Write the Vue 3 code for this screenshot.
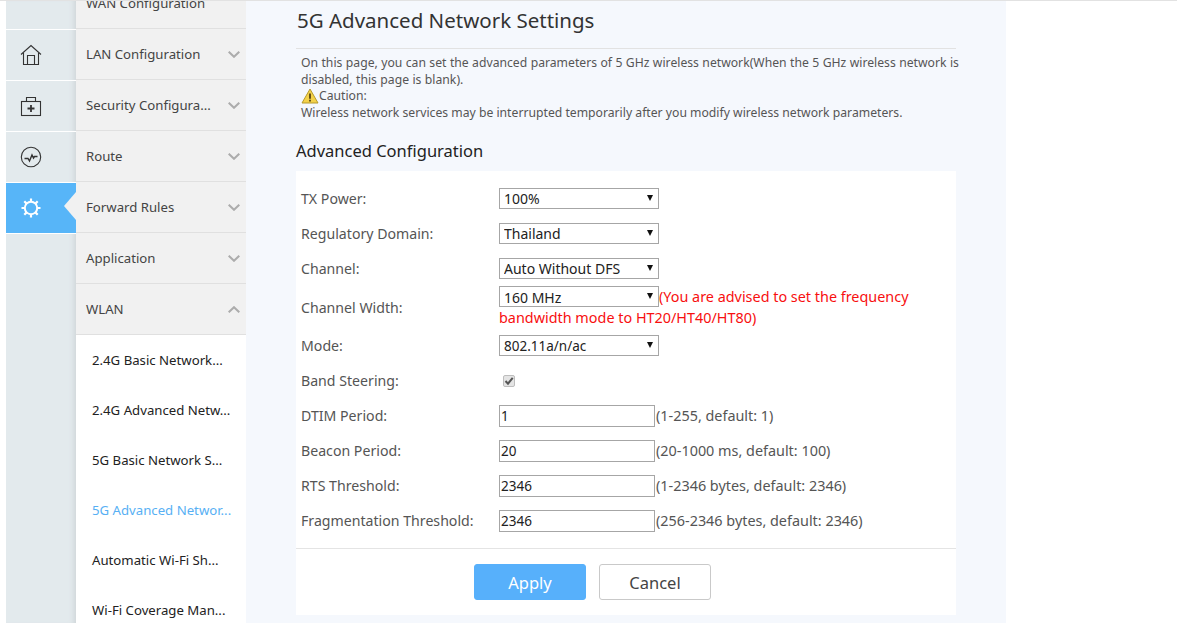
<script setup>
const railItems = [
  { key: 'blank', h: 28 },
  { key: 'home', h: 50 },
  { key: 'kit', h: 50 },
  { key: 'pulse', h: 50 },
  { key: 'gear', h: 50, active: true },
  { key: 'rest', h: 400 }
]
const menus = [
  { label: 'WAN Configuration', noChevron: true },
  { label: 'LAN Configuration' },
  { label: 'Security Configura...' },
  { label: 'Route' },
  { label: 'Forward Rules' },
  { label: 'Application' },
  { label: 'WLAN', open: true }
]
const subs = [
  { label: '2.4G Basic Network...' },
  { label: '2.4G Advanced Netw...' },
  { label: '5G Basic Network S...' },
  { label: '5G Advanced Networ...', active: true },
  { label: 'Automatic Wi-Fi Sh...' },
  { label: 'Wi-Fi Coverage Man...' }
]
</script>

<template>
  <div class="page">
    <aside class="rail">
      <div v-for="r in railItems" :key="r.key" class="rail-item" :class="{ active: r.active }" :style="{ height: r.h + 'px' }">
        <svg v-if="r.key === 'home'" width="22" height="22" viewBox="0 0 22 22" fill="none" stroke="#333" stroke-width="1.1">
          <path d="M1 10.5 11 1.5l10 9" />
          <path d="M3.5 9v11.5h15V9" />
          <path d="M7.5 20.5V11.5h7v9" />
        </svg>
        <svg v-else-if="r.key === 'kit'" width="22" height="22" viewBox="0 0 22 22" fill="none" stroke="#333" stroke-width="1.1">
          <rect x="1.5" y="6.5" width="19" height="14" />
          <path d="M6.5 6.5v-4h9v4" />
          <path d="M11 10v7M7.5 13.5h7" stroke-width="1.8" />
        </svg>
        <svg v-else-if="r.key === 'pulse'" width="22" height="22" viewBox="0 0 22 22" fill="none" stroke="#333" stroke-width="1.1">
          <circle cx="11" cy="11" r="9.7" />
          <path d="M4.5 12.5h3.5l1.5 2.5 2.5-6 1.5 3 1-1.5h3" stroke-width="1.4" />
        </svg>
        <svg v-else-if="r.key === 'gear'" width="22" height="22" viewBox="0 0 22 22" fill="none" stroke="#fff">
          <circle cx="11" cy="11" r="6.2" stroke-width="2" />
          <path d="M11 1.5v3.4M11 17.1v3.4M1.5 11h3.4M17.1 11h3.4M4.3 4.3l2.3 2.3M15.4 15.4l2.3 2.3M17.7 4.3l-2.3 2.3M6.6 15.4l-2.3 2.3" stroke-width="2.2" />
        </svg>
      </div>
    </aside>

    <nav class="menu">
      <div v-for="m in menus" :key="m.label" class="menu-row">
        <span>{{ m.label }}</span>
        <svg v-if="!m.noChevron" class="chev" width="12" height="7" viewBox="0 0 12 7" fill="none" stroke="#acacac" stroke-width="2">
          <path :d="m.open ? 'M.7 6.3 6 1.2l5.3 5.1' : 'M.7.7 6 5.8 11.3.7'" />
        </svg>
      </div>
      <div v-for="s in subs" :key="s.label" class="sub-row" :class="{ active: s.active }">{{ s.label }}</div>
    </nav>

    <main class="content">
      <h1 class="title">5G Advanced Network Settings</h1>
      <div class="intro">
        <p class="lead">On this page, you can set the advanced parameters of 5 GHz wireless network(When the 5 GHz wireless network is disabled, this page is blank).</p>
        <p class="caution">
          <svg width="18" height="16" viewBox="0 0 18 16">
            <path d="M9 1 17 15H1Z" fill="#f4d24a" stroke="#b59a2c" stroke-width="1" stroke-linejoin="round" />
            <path d="M9 5.5v5.2M9 11.8v1.6" stroke="#4a3a10" stroke-width="1.7" />
          </svg><span>Caution:</span>
        </p>
        <p>Wireless network services may be interrupted temporarily after you modify wireless network parameters.</p>
      </div>
      <h2 class="sub-title">Advanced Configuration</h2>
      <section class="panel">
        <div class="form">
          <div class="row">
            <label>TX Power:</label>
            <div class="sel"><select><option>100%</option></select></div>
          </div>
          <div class="row">
            <label>Regulatory Domain:</label>
            <div class="sel"><select><option>Thailand</option></select></div>
          </div>
          <div class="row">
            <label>Channel:</label>
            <div class="sel"><select><option>Auto Without DFS</option></select></div>
          </div>
          <div class="row tall">
            <label>Channel Width:</label>
            <div class="field warn">
              <div class="sel inline"><select><option>160 MHz</option></select></div><span class="red">(You are advised to set the frequency bandwidth mode to HT20/HT40/HT80)</span>
            </div>
          </div>
          <div class="row">
            <label>Mode:</label>
            <div class="sel narrow"><select><option>802.11a/n/ac</option></select></div>
          </div>
          <div class="row">
            <label>Band Steering:</label>
            <span class="check-wrap">
              <input class="check" type="checkbox" checked disabled />
              <svg class="tick" width="12" height="12" viewBox="0 0 12 12" fill="none" stroke="#555" stroke-width="2">
                <path d="M2.5 6 5 8.7 9.7 2.8" />
              </svg>
            </span>
          </div>
          <div class="row">
            <label>DTIM Period:</label>
            <input class="txt" type="text" value="1" /><span class="hint">(1-255, default: 1)</span>
          </div>
          <div class="row">
            <label>Beacon Period:</label>
            <input class="txt" type="text" value="20" /><span class="hint">(20-1000 ms, default: 100)</span>
          </div>
          <div class="row">
            <label>RTS Threshold:</label>
            <input class="txt" type="text" value="2346" /><span class="hint">(1-2346 bytes, default: 2346)</span>
          </div>
          <div class="row">
            <label>Fragmentation Threshold:</label>
            <input class="txt" type="text" value="2346" /><span class="hint">(256-2346 bytes, default: 2346)</span>
          </div>
        </div>
        <div class="actions">
          <button class="btn primary">Apply</button>
          <button class="btn">Cancel</button>
        </div>
      </section>
    </main>
  </div>
</template>

<style>
html, body { margin: 0; height: 100%; overflow: hidden; background: #fff; }
</style>

<style scoped>
.page {
  display: flex;
  height: 623px;
  padding-left: 6px;
  box-sizing: border-box;
  overflow: hidden;
  border-top: 1px solid #e2e2e2;
  font-family: "Noto Sans", "Open Sans", sans-serif;
  width: 1177px;
}
.rail {
  width: 70px;
  flex: none;
  background: #e3eaed;
  box-shadow: inset -6px 0 6px -5px #c9cfd2;
}
.rail-item {
  display: flex;
  align-items: center;
  justify-content: center;
  border-bottom: 1px solid #fff;
  padding-right: 20px;
}
.rail-item.active {
  background: #57b5f8;
  position: relative;
}
.rail-item.active::after {
  content: "";
  position: absolute;
  right: 0;
  top: 9px;
  border-style: solid;
  border-width: 14px 12px 14px 0;
  border-color: transparent #f1f1f1 transparent transparent;
}
.menu {
  width: 170px;
  flex: none;
  background: #fff;
  margin-top: -23px;
}
.menu-row {
  height: 50px;
  background: #f1f1f1;
  border-bottom: 1px solid #e0e0e0;
  display: flex;
  align-items: center;
  justify-content: space-between;
  padding: 0 6px 0 10px;
  font-size: 13.2px;
  color: #444;
  white-space: nowrap;
}
.chev { flex: none; }
.sub-row {
  height: 50px;
  line-height: 50px;
  padding-left: 16px;
  font-size: 13.2px;
  color: #222;
  white-space: nowrap;
}
.sub-row.active { color: #57b0f4; }
.content {
  width: 760px;
  flex: none;
  background: #f5f8fd;
  padding: 0 50px;
  box-sizing: border-box;
}
.title {
  margin: 0;
  height: 48px;
  box-sizing: border-box;
  padding: 5px 0 0 1px;
  line-height: 28px;
  font-size: 20.5px;
  font-weight: 400;
  color: #333;
  border-bottom: 1px solid #e2e2e2;
}
.intro {
  padding: 5px 0 0 5px;
  margin-right: -4px;
  font-size: 12.2px;
  line-height: 17px;
  color: #555;
}
.intro p { margin: 0; }
.intro .lead { word-spacing: 0.25px; }
.caution { display: flex; align-items: center; height: 17px; margin-top: -1px !important; }
.sub-title {
  margin: 0;
  padding-top: 18px;
  height: 24px;
  line-height: 24px;
  font-size: 16.5px;
  font-weight: 400;
  color: #222;
}
.panel {
  margin-top: 8px;
  background: #fff;
  height: 444px;
}
.form { padding: 10px 0 0 5px; height: 377px; box-sizing: border-box; }
.row {
  height: 35px;
  display: flex;
  align-items: center;
  font-size: 14.4px;
  color: #555;
}
.row.tall { height: 42px; }
.row label { width: 198px; flex: none; white-space: nowrap; font-size: 14.15px; }
.sel {
  position: relative;
  width: 160px;
  height: 21px;
  flex: none;
}
.sel.inline { display: inline-block; vertical-align: top; }
.sel::after {
  content: "";
  position: absolute;
  right: 6px;
  top: 7px;
  border-style: solid;
  border-width: 6px 3.5px 0 3.5px;
  border-color: #111 transparent transparent transparent;
  pointer-events: none;
}
.sel select {
  appearance: none;
  width: 100%;
  height: 100%;
  box-sizing: border-box;
  border: 1px solid #a6a6a6;
  border-radius: 0;
  background: #fff;
  padding: 0 0 0 4px;
  font: inherit;
  font-size: 14px;
  color: #222;
  outline: none;
}
.sel.narrow select { font-size: 13.5px; }
.field { flex: 1; }
.warn { line-height: 21px; }
.red { color: #f80f0f; }
.check-wrap { position: relative; display: block; width: 12px; height: 12px; margin-left: 4px; }
.check {
  appearance: none;
  display: block;
  margin: 0;
  width: 12px;
  height: 12px;
  box-sizing: border-box;
  border: 1px solid #bdbdbd;
  border-radius: 2px;
  background: #e4e4e4;
}
.tick { position: absolute; left: 0; top: 0; }
.txt {
  width: 156px;
  height: 22px;
  box-sizing: border-box;
  border: 1px solid #a6a6a6;
  padding: 0 1px;
  font: inherit;
  font-size: 13.5px;
  color: #222;
  outline: none;
  flex: none;
}
.hint { padding-left: 1px; white-space: nowrap; }
.actions {
  border-top: 1px solid #e4e4e4;
  display: flex;
  gap: 13px;
  padding: 15px 0 0 178px;
}
.btn {
  width: 112px;
  height: 36px;
  border: 1px solid #c9c9c9;
  border-radius: 3px;
  background: #fff;
  font: inherit;
  font-size: 16.5px;
  color: #444;
  padding: 0;
}
.btn.primary {
  background: #57b0fb;
  border-color: #57b0fb;
  color: #fff;
}
</style>
